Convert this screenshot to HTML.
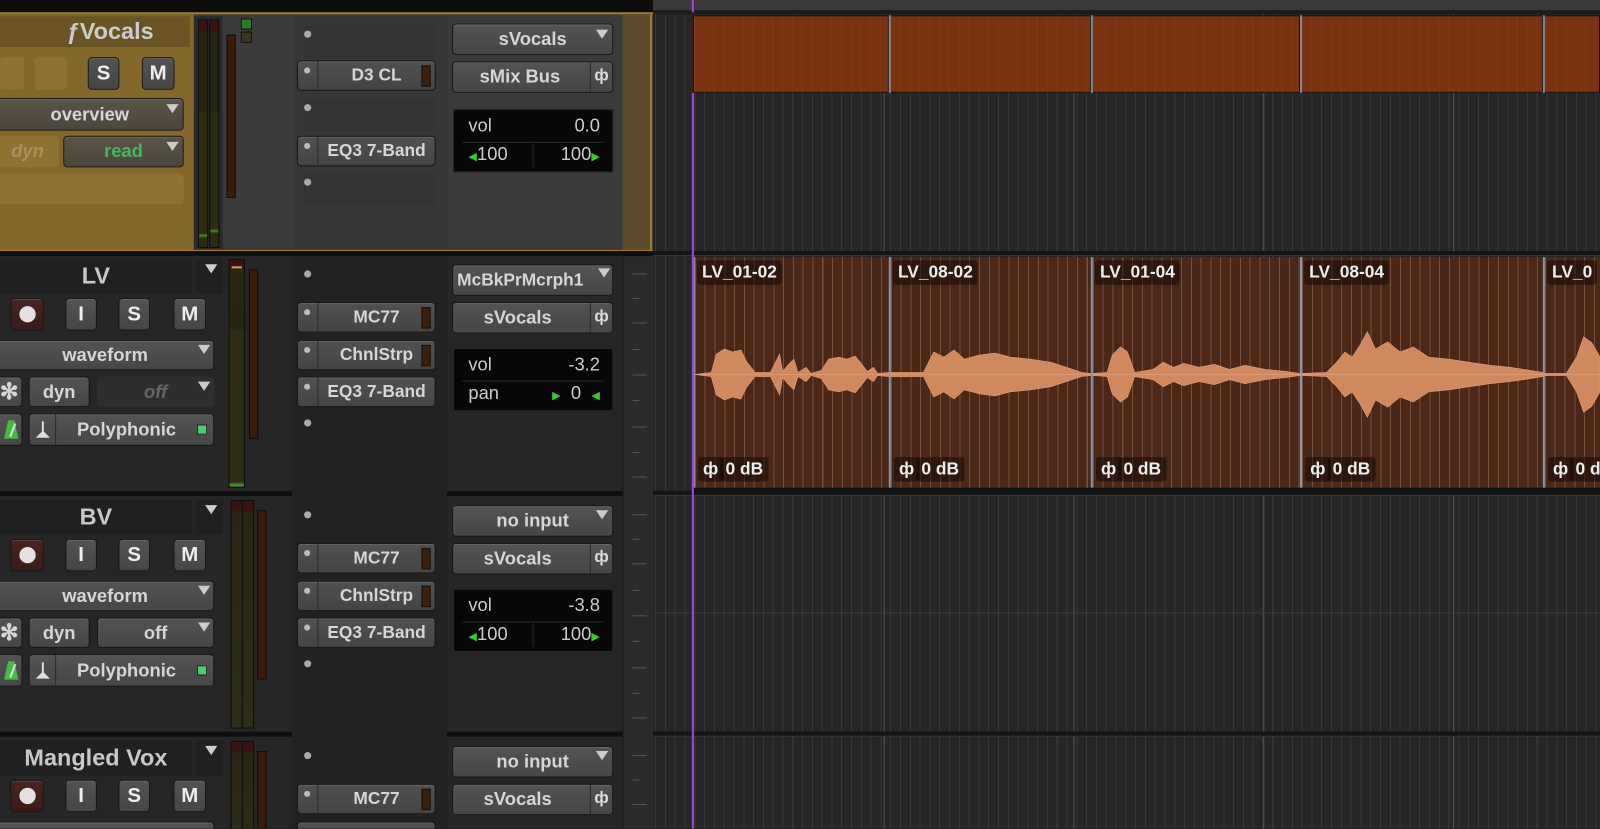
<!DOCTYPE html>
<html><head><meta charset="utf-8"><style>
*{margin:0;padding:0;box-sizing:border-box}
body{width:1600px;height:828px;overflow:hidden;background:#1c1c1c;font-family:"Liberation Sans",Arial,sans-serif}
#w{position:absolute;left:0;top:0;width:1568px;height:812px;transform:scale(1.020408);transform-origin:0 0;overflow:hidden;background:#1c1c1c}
.a{position:absolute}
.b{position:absolute;background:linear-gradient(#535353,#464646);border:1px solid #181818;border-radius:4px;color:#d6d6d6;font-weight:bold;font-size:18px;text-align:center;box-shadow:inset 0 1px 0 rgba(255,255,255,.12);white-space:nowrap}
.tri{position:absolute;width:0;height:0;border-left:6px solid transparent;border-right:6px solid transparent;border-top:9px solid #ccc}
.dot{position:absolute;width:7px;height:7px;border-radius:50%;background:#aaa}
.vol{position:absolute;background:#070707;border:1px solid #2a2a2a;color:#ccc;font-size:18px}
.mt{position:absolute;background:linear-gradient(#3a1212 0,#3a1212 3%,#2a2612 4%,#262510 30%,#2f2e12 31%,#2e2e14 98%,#4a8a2a 99%);border:1px solid #0e0e0e}
.mt2{position:absolute;background:#3b1c0a;border:1px solid #0e0e0e}
.ins{position:absolute;height:30px;border-radius:4px;background:linear-gradient(#515151,#444);border:1px solid #181818;color:#d6d6d6;font-weight:bold;font-size:17px;box-shadow:inset 0 1px 0 rgba(255,255,255,.12);white-space:nowrap}
.ins .l{position:absolute;left:0;top:0;width:20px;height:100%;border-right:1px solid #2a2a2a}
.ins .l i{position:absolute;left:6px;top:6px;width:6px;height:6px;border-radius:50%;background:#bbb}
.ins .t{position:absolute;left:20px;right:0;top:0;line-height:28px;text-align:center}
.ins .r{position:absolute;right:4px;top:4px;width:9px;height:21px;background:#3d1e08;border:1px solid #111}
.fd{position:absolute;right:0;top:0;width:22px;height:100%;border-left:1px solid #2a2a2a;color:#ddd;font-size:16px;line-height:28px;text-align:center}
.grid{position:absolute;background-image:repeating-linear-gradient(90deg,#383838 0,#383838 1px,transparent 1px,transparent 9.6px)}
.clip{position:absolute;top:252px;height:226px;background-color:#4a2717;background-image:repeating-linear-gradient(90deg,rgba(230,170,140,.3) 0,rgba(230,170,140,.3) 1px,transparent 1px,transparent 9.6px);border-left:2px solid #8896a8}
.lab{position:absolute;background:rgba(20,10,5,.55);color:#eee;font-weight:bold;font-size:17px;padding:2px 5px;border-radius:3px;white-space:nowrap}
.tick{position:absolute;left:620px;width:14px;height:1px;background:#555}
</style></head><body><div id="w">

<div class="a" style="left:0;top:0;width:640px;height:12px;background:#0d0d0d"></div>
<div class="a" style="left:640px;top:0;width:928px;height:12px;background:#3a3a3a;border-bottom:2px solid #1a1a1a"></div>

<div class="a" style="left:0;top:12px;width:640px;height:235px;background:#3a3a3a;border-top:2px solid #a07a2a"></div>
<div class="a" style="left:0;top:14px;width:190px;height:233px;background:#84672a"></div>
<div class="a" style="left:0;top:16px;width:186px;height:30px;background:#6a5426"></div>
<div class="a" style="left:0;top:17px;width:186px;text-align:center;color:#ccc;font-weight:bold;font-size:23px;padding-left:30px">ƒVocals</div>
<div class="a" style="left:0;top:56px;width:24px;height:32px;background:#8f7131;border-radius:4px"></div>
<div class="a" style="left:34px;top:56px;width:32px;height:32px;background:#8f7131;border-radius:4px"></div>
<div class="b" style="left:86px;top:56px;width:31px;height:32px;line-height:30px;font-size:20px;color:#eee">S</div>
<div class="b" style="left:139px;top:56px;width:32px;height:32px;line-height:30px;font-size:20px;color:#eee">M</div>
<div class="b" style="left:-4px;top:96px;width:184px;height:32px;line-height:30px;background:linear-gradient(#5a5446,#4c473c)">overview</div>
<div class="tri" style="left:163px;top:102px"></div>
<div class="a" style="left:-4px;top:133px;width:62px;height:31px;background:#8f7131;border-radius:4px;color:#a89060;font-style:italic;font-weight:bold;font-size:18px;line-height:31px;text-align:center">dyn</div>
<div class="b" style="left:62px;top:133px;width:118px;height:31px;line-height:29px;color:#44b860;background:linear-gradient(#5a5446,#4c473c)">read</div>
<div class="tri" style="left:163px;top:139px"></div>
<div class="a" style="left:-4px;top:170px;width:184px;height:30px;background:#8f7131;border-radius:4px"></div>
<div class="a" style="left:190px;top:16px;width:28px;height:228px;background:#2a2a2a"></div>
<div class="mt" style="left:194px;top:19px;width:10px;height:224px;background:linear-gradient(#3a1212 0,#3a1212 5%,#262510 6%,#262510 40%,#2c2c12 41%,#2c2c12 94%,#4a8a2a 95%,#2c2c12 96%)"></div>
<div class="mt" style="left:205px;top:19px;width:10px;height:224px;background:linear-gradient(#3a1212 0,#3a1212 5%,#262510 6%,#262510 40%,#2c2c12 41%,#2c2c12 92%,#4a8a2a 93%,#2c2c12 94%)"></div>
<div class="mt2" style="left:222px;top:34px;width:9px;height:160px"></div>
<div class="a" style="left:236px;top:18px;width:11px;height:11px;background:#2f7a2a;border:1px solid #111"></div>
<div class="a" style="left:236px;top:31px;width:11px;height:11px;background:#3a3222;border:1px solid #111"></div>
<div class="a" style="left:288px;top:16px;width:150px;height:230px;background:#363636"></div>
<div class="a" style="left:297px;top:24px;width:130px;height:32px;background:#333;border-radius:4px"></div><div class="dot" style="left:298px;top:30px"></div>
<div class="ins" style="left:291px;top:59px;width:136px"><div class="l"><i></i></div><div class="t">D3 CL</div><div class="r"></div></div>
<div class="a" style="left:297px;top:96px;width:130px;height:32px;background:#333;border-radius:4px"></div><div class="dot" style="left:298px;top:102px"></div>
<div class="ins" style="left:291px;top:133px;width:136px"><div class="l"><i></i></div><div class="t">EQ3 7-Band</div></div>
<div class="a" style="left:297px;top:169px;width:130px;height:32px;background:#333;border-radius:4px"></div><div class="dot" style="left:298px;top:175px"></div>
<div class="b" style="left:443px;top:23px;width:158px;height:31px;line-height:29px">sVocals</div><div class="tri" style="left:584px;top:29px"></div>
<div class="b" style="left:443px;top:60px;width:158px;height:31px;line-height:29px;text-align:left;padding-left:26px">sMix Bus<div class="fd">ф</div></div>
<div class="vol" style="left:444px;top:107px;width:157px;height:62px">
<div class="a" style="left:14px;top:5px">vol</div><div class="a" style="right:12px;top:5px">0.0</div>
<div class="a" style="left:8px;right:8px;top:31px;height:1px;background:#2a2a2a"></div>
<div class="a" style="left:14px;top:33px"><span style="color:#3c3;font-size:11px">◀</span>100</div><div class="a" style="left:77px;top:32px;width:1px;height:24px;background:#2a2a2a"></div><div class="a" style="right:12px;top:33px">100<span style="color:#3c3;font-size:11px">▶</span></div></div>
<div class="a" style="left:610px;top:14px;width:29px;height:233px;background:#5c4c2c;border-right:2px solid #a07a2a"></div>
<div class="a" style="left:0;top:245px;width:640px;height:2px;background:#a07a2a"></div>

<div class="a" style="left:0;top:246px;width:1568px;height:5px;background:#0e0e0e"></div>
<div class="a" style="left:0;top:481px;width:1568px;height:5px;background:#0e0e0e"></div>
<div class="a" style="left:0;top:717px;width:1568px;height:5px;background:#0e0e0e"></div>

<div class="a" style="left:0;top:251px;width:640px;height:230px;background:#262626"></div>
<div class="a" style="left:0;top:486px;width:640px;height:231px;background:#262626"></div>
<div class="a" style="left:0;top:722px;width:640px;height:90px;background:#262626"></div>
<div class="a" style="left:286px;top:251px;width:152px;height:561px;background:#222"></div>
<div class="a" style="left:610px;top:251px;width:30px;height:561px;background:#2a2a2a;border-left:1px solid #181818"></div>

<!-- LV -->
<div class="a" style="left:0;top:254px;width:188px;height:34px;background:#202020"></div>
<div class="a" style="left:0;top:254px;width:188px;text-align:center;color:#c8c8c8;font-weight:bold;font-size:23px;line-height:32px">LV</div>
<div class="a" style="left:192px;top:254px;width:26px;height:34px;background:#202020"></div><div class="tri" style="left:201px;top:259px"></div>
<div class="b" style="left:10px;top:292px;width:33px;height:32px;background:linear-gradient(#4a2424,#3a1a1a)"><div class="a" style="left:8px;top:7px;width:16px;height:16px;border-radius:50%;background:#e8e0e0"></div></div>
<div class="b" style="left:64px;top:292px;width:31px;height:32px;line-height:30px;font-size:20px;color:#eee">I</div>
<div class="b" style="left:116px;top:292px;width:31px;height:32px;line-height:30px;font-size:20px;color:#eee">S</div>
<div class="b" style="left:170px;top:292px;width:32px;height:32px;line-height:30px;font-size:20px;color:#eee">M</div>
<div class="b" style="left:-4px;top:333px;width:214px;height:30px;line-height:28px">waveform</div><div class="tri" style="left:194px;top:338px"></div>
<div class="b" style="left:-4px;top:369px;width:26px;height:30px;line-height:28px;font-size:22px">✻</div>
<div class="b" style="left:28px;top:369px;width:60px;height:30px;line-height:28px">dyn</div>
<div class="a" style="left:95px;top:369px;width:115px;height:30px;border-radius:4px;background:#2e2e2e;color:#666;font-style:italic;font-weight:bold;font-size:18px;line-height:30px;text-align:center">off</div><div class="tri" style="left:194px;top:374px"></div>
<div class="b" style="left:-4px;top:405px;width:26px;height:32px"><svg class="a" style="left:6px;top:5px" width="16" height="20"><path d="M5 1 L11 1 L15 19 L1 19 Z" fill="#3fbf3f"/><path d="M7 17 L12 4" stroke="#ddd" stroke-width="2"/></svg></div>
<div class="b" style="left:28px;top:405px;width:182px;height:32px;line-height:30px;padding-left:10px">Polyphonic<div class="a" style="left:0;top:0;width:26px;height:30px;border-right:1px solid #2a2a2a"><svg class="a" style="left:5px;top:6px" width="16" height="18"><path d="M7 1 L9 1 L9 11 L15 17 L1 17 L7 11 Z" fill="#ddd"/></svg></div><div class="a" style="right:6px;top:10px;width:10px;height:10px;background:#4ccc6c;border:1px solid #222"></div></div>
<div class="mt" style="left:224px;top:254px;width:16px;height:224px"></div>
<div class="a" style="left:227px;top:261px;width:10px;height:2px;background:#d8a050"></div>
<div class="mt2" style="left:244px;top:264px;width:9px;height:166px"></div>
<div class="dot" style="left:298px;top:265px"></div>
<div class="ins" style="left:291px;top:296px;width:136px"><div class="l"><i></i></div><div class="t">MC77</div><div class="r"></div></div>
<div class="ins" style="left:291px;top:333px;width:136px"><div class="l"><i></i></div><div class="t">ChnlStrp</div><div class="r"></div></div>
<div class="ins" style="left:291px;top:369px;width:136px"><div class="l"><i></i></div><div class="t">EQ3 7-Band</div></div>
<div class="dot" style="left:298px;top:411px"></div>
<div class="b" style="left:443px;top:259px;width:158px;height:31px;line-height:29px;font-size:17px;text-align:left;padding-left:4px">McBkPrMcrph1</div><div class="tri" style="left:586px;top:263px"></div>
<div class="b" style="left:443px;top:296px;width:158px;height:31px;line-height:29px;text-align:left;padding-left:30px">sVocals<div class="fd">ф</div></div>
<div class="vol" style="left:444px;top:341px;width:157px;height:62px">
<div class="a" style="left:14px;top:5px">vol</div><div class="a" style="right:12px;top:5px">-3.2</div>
<div class="a" style="left:8px;right:8px;top:31px;height:1px;background:#2a2a2a"></div>
<div class="a" style="left:14px;top:33px">pan</div><div class="a" style="right:12px;top:33px"><span style="color:#3c3;font-size:11px">▶</span>&nbsp; 0 &nbsp;<span style="color:#3c3;font-size:11px">◀</span></div></div>

<!-- BV -->
<div class="a" style="left:0;top:490px;width:188px;height:34px;background:#202020"></div>
<div class="a" style="left:0;top:490px;width:188px;text-align:center;color:#c8c8c8;font-weight:bold;font-size:23px;line-height:32px">BV</div>
<div class="a" style="left:192px;top:490px;width:26px;height:34px;background:#202020"></div><div class="tri" style="left:201px;top:495px"></div>
<div class="b" style="left:10px;top:528px;width:33px;height:32px;background:linear-gradient(#4a2424,#3a1a1a)"><div class="a" style="left:8px;top:7px;width:16px;height:16px;border-radius:50%;background:#e8e0e0"></div></div>
<div class="b" style="left:64px;top:528px;width:31px;height:32px;line-height:30px;font-size:20px;color:#eee">I</div>
<div class="b" style="left:116px;top:528px;width:31px;height:32px;line-height:30px;font-size:20px;color:#eee">S</div>
<div class="b" style="left:170px;top:528px;width:32px;height:32px;line-height:30px;font-size:20px;color:#eee">M</div>
<div class="b" style="left:-4px;top:569px;width:214px;height:30px;line-height:28px">waveform</div><div class="tri" style="left:194px;top:574px"></div>
<div class="b" style="left:-4px;top:605px;width:26px;height:30px;line-height:28px;font-size:22px">✻</div>
<div class="b" style="left:28px;top:605px;width:60px;height:30px;line-height:28px">dyn</div>
<div class="b" style="left:95px;top:605px;width:115px;height:30px;line-height:28px">off</div><div class="tri" style="left:194px;top:610px"></div>
<div class="b" style="left:-4px;top:641px;width:26px;height:32px"><svg class="a" style="left:6px;top:5px" width="16" height="20"><path d="M5 1 L11 1 L15 19 L1 19 Z" fill="#3fbf3f"/><path d="M7 17 L12 4" stroke="#ddd" stroke-width="2"/></svg></div>
<div class="b" style="left:28px;top:641px;width:182px;height:32px;line-height:30px;padding-left:10px">Polyphonic<div class="a" style="left:0;top:0;width:26px;height:30px;border-right:1px solid #2a2a2a"><svg class="a" style="left:5px;top:6px" width="16" height="18"><path d="M7 1 L9 1 L9 11 L15 17 L1 17 L7 11 Z" fill="#ddd"/></svg></div><div class="a" style="right:6px;top:10px;width:10px;height:10px;background:#4ccc6c;border:1px solid #222"></div></div>
<div class="mt" style="left:226px;top:490px;width:12px;height:224px;background:linear-gradient(#3a1212 0,#3a1212 4%,#2a2612 5%,#2e2e14 100%)"></div>
<div class="mt" style="left:237px;top:490px;width:12px;height:224px;background:linear-gradient(#3a1212 0,#3a1212 4%,#2a2612 5%,#2e2e14 100%)"></div>
<div class="mt2" style="left:252px;top:500px;width:9px;height:166px"></div>
<div class="dot" style="left:298px;top:501px"></div>
<div class="ins" style="left:291px;top:532px;width:136px"><div class="l"><i></i></div><div class="t">MC77</div><div class="r"></div></div>
<div class="ins" style="left:291px;top:569px;width:136px"><div class="l"><i></i></div><div class="t">ChnlStrp</div><div class="r"></div></div>
<div class="ins" style="left:291px;top:605px;width:136px"><div class="l"><i></i></div><div class="t">EQ3 7-Band</div></div>
<div class="dot" style="left:298px;top:647px"></div>
<div class="b" style="left:443px;top:495px;width:158px;height:31px;line-height:29px">no input</div><div class="tri" style="left:584px;top:500px"></div>
<div class="b" style="left:443px;top:532px;width:158px;height:31px;line-height:29px;text-align:left;padding-left:30px">sVocals<div class="fd">ф</div></div>
<div class="vol" style="left:444px;top:577px;width:157px;height:62px">
<div class="a" style="left:14px;top:5px">vol</div><div class="a" style="right:12px;top:5px">-3.8</div>
<div class="a" style="left:8px;right:8px;top:31px;height:1px;background:#2a2a2a"></div>
<div class="a" style="left:14px;top:33px"><span style="color:#3c3;font-size:11px">◀</span>100</div><div class="a" style="left:77px;top:32px;width:1px;height:24px;background:#2a2a2a"></div><div class="a" style="right:12px;top:33px">100<span style="color:#3c3;font-size:11px">▶</span></div></div>

<!-- Mangled Vox -->
<div class="a" style="left:0;top:726px;width:188px;height:34px;background:#202020"></div>
<div class="a" style="left:0;top:726px;width:188px;text-align:center;color:#c8c8c8;font-weight:bold;font-size:23px;line-height:32px">Mangled Vox</div>
<div class="a" style="left:192px;top:726px;width:26px;height:34px;background:#202020"></div><div class="tri" style="left:201px;top:731px"></div>
<div class="b" style="left:10px;top:764px;width:33px;height:32px;background:linear-gradient(#4a2424,#3a1a1a)"><div class="a" style="left:8px;top:7px;width:16px;height:16px;border-radius:50%;background:#e8e0e0"></div></div>
<div class="b" style="left:64px;top:764px;width:31px;height:32px;line-height:30px;font-size:20px;color:#eee">I</div>
<div class="b" style="left:116px;top:764px;width:31px;height:32px;line-height:30px;font-size:20px;color:#eee">S</div>
<div class="b" style="left:170px;top:764px;width:32px;height:32px;line-height:30px;font-size:20px;color:#eee">M</div>
<div class="b" style="left:-4px;top:805px;width:214px;height:30px"></div>
<div class="mt" style="left:226px;top:726px;width:12px;height:100px;background:linear-gradient(#3a1212 0,#3a1212 10%,#2a2612 11%,#2e2e14 100%)"></div>
<div class="mt" style="left:237px;top:726px;width:12px;height:100px;background:linear-gradient(#3a1212 0,#3a1212 10%,#2a2612 11%,#2e2e14 100%)"></div>
<div class="mt2" style="left:252px;top:736px;width:9px;height:90px"></div>
<div class="dot" style="left:298px;top:737px"></div>
<div class="ins" style="left:291px;top:768px;width:136px"><div class="l"><i></i></div><div class="t">MC77</div><div class="r"></div></div>
<div class="ins" style="left:291px;top:805px;width:136px"></div>
<div class="b" style="left:443px;top:731px;width:158px;height:31px;line-height:29px">no input</div><div class="tri" style="left:584px;top:736px"></div>
<div class="b" style="left:443px;top:768px;width:158px;height:31px;line-height:29px;text-align:left;padding-left:30px">sVocals<div class="fd">ф</div></div>

<div class="tick" style="top:268px"></div><div class="tick" style="top:292px;width:7px"></div><div class="tick" style="top:316px"></div><div class="tick" style="top:342px;width:7px"></div><div class="tick" style="top:367px"></div><div class="tick" style="top:392px;width:7px"></div><div class="tick" style="top:418px"></div><div class="tick" style="top:443px;width:7px"></div><div class="tick" style="top:467px"></div>
<div class="tick" style="top:504px"></div><div class="tick" style="top:528px;width:7px"></div><div class="tick" style="top:552px"></div><div class="tick" style="top:578px;width:7px"></div><div class="tick" style="top:603px"></div><div class="tick" style="top:628px;width:7px"></div><div class="tick" style="top:654px"></div><div class="tick" style="top:679px;width:7px"></div><div class="tick" style="top:703px"></div>
<div class="tick" style="top:740px"></div><div class="tick" style="top:764px;width:7px"></div><div class="tick" style="top:788px"></div>

<!-- TIMELINE -->
<div class="a" style="left:640px;top:14px;width:928px;height:232px;background:#262626"></div>
<div class="grid" style="left:642px;top:14px;width:926px;height:232px"></div>
<div class="a" style="left:640px;top:251px;width:928px;height:230px;background:#262626"></div>
<div class="grid" style="left:642px;top:251px;width:926px;height:230px"></div>
<div class="a" style="left:640px;top:486px;width:928px;height:231px;background:#262626"></div>
<div class="grid" style="left:642px;top:486px;width:926px;height:231px"></div>
<div class="a" style="left:640px;top:722px;width:928px;height:90px;background:#262626"></div>
<div class="grid" style="left:642px;top:722px;width:926px;height:90px"></div>
<div class="a" style="left:866px;top:14px;width:1px;height:798px;background:#555"></div>
<div class="a" style="left:1052px;top:14px;width:1px;height:798px;background:#555"></div>
<div class="a" style="left:1238px;top:14px;width:1px;height:798px;background:#555"></div>
<div class="a" style="left:1424px;top:14px;width:1px;height:798px;background:#555"></div>
<div class="a" style="left:640px;top:246px;width:928px;height:5px;background:#141414;border-bottom:1px solid #3a3a3a"></div>
<div class="a" style="left:640px;top:481px;width:928px;height:5px;background:#141414;border-bottom:1px solid #3a3a3a"></div>
<div class="a" style="left:640px;top:717px;width:928px;height:5px;background:#141414;border-bottom:1px solid #3a3a3a"></div>
<div class="a" style="left:640px;top:600px;width:928px;height:1px;background:#3a3a3a"></div>

<div class="a" style="left:679px;top:15px;width:889px;height:76px;background:#7a3311;border:1px solid #111;background-image:repeating-linear-gradient(90deg,rgba(255,255,255,.03) 0,rgba(255,255,255,.03) 1px,transparent 1px,transparent 9.6px)"></div>
<div class="a" style="left:870px;top:15px;width:3px;height:76px;background:#888;border-left:1px solid #111"></div>
<div class="a" style="left:1068px;top:15px;width:3px;height:76px;background:#888;border-left:1px solid #111"></div>
<div class="a" style="left:1273px;top:15px;width:3px;height:76px;background:#888;border-left:1px solid #111"></div>
<div class="a" style="left:1511px;top:15px;width:3px;height:76px;background:#888;border-left:1px solid #111"></div>

<div class="clip" style="left:679px;width:193px"></div>
<div class="clip" style="left:871px;width:199px"></div>
<div class="clip" style="left:1069px;width:206px"></div>
<div class="clip" style="left:1274px;width:239px"></div>
<div class="clip" style="left:1512px;width:60px"></div>
<div class="a" style="left:679px;top:478px;width:889px;height:3px;background:#111"></div>

<svg class="a" style="left:0;top:0" width="1568" height="812">
<g id="wt" fill="#d0895e" stroke="#e0a07c" stroke-width=".6">
<path d="M681,367 L697,365 L702,347 L710,342 L718,345 L726,343 L732,355 L740,365 L755,365 L760,355 L764,347 L767,364 L772,358 L778,352 L782,365 L790,360 L795,366 L805,363 L812,352 L822,350 L830,352 L838,349 L843,355 L850,364 L856,360 L860,366 L871,365 L871,367 Z"/>
<path d="M873,367 L873,365 L905,365 L915,345 L925,350 L935,343 L945,352 L960,348 L975,346 L990,350 L1010,352 L1030,355 L1045,360 L1060,365 L1069,366 L1069,367 Z"/>
<path d="M1071,367 L1071,366 L1085,365 L1090,348 L1098,340 L1105,345 L1112,365 L1130,362 L1140,355 L1150,360 L1160,356 L1175,360 L1190,357 L1205,362 L1220,358 L1240,362 L1260,364 L1274,366 L1274,367 Z"/>
<path d="M1276,367 L1276,366 L1300,365 L1310,355 L1318,345 L1325,350 L1333,338 L1340,325 L1348,342 L1360,335 L1372,345 L1385,340 L1400,350 L1420,352 L1440,355 L1460,358 L1480,360 L1500,363 L1512,365 L1512,367 Z"/>
<path d="M1514,367 L1514,366 L1535,366 L1545,350 L1552,330 L1560,336 L1568,350 L1568,367 Z"/>
</g>
<use href="#wt" transform="translate(0,734) scale(1,-1)"/>
</svg>

<div class="lab" style="left:683px;top:255px">LV_01-02</div>
<div class="lab" style="left:875px;top:255px">LV_08-02</div>
<div class="lab" style="left:1073px;top:255px">LV_01-04</div>
<div class="lab" style="left:1278px;top:255px">LV_08-04</div>
<div class="lab" style="left:1516px;top:255px">LV_0</div>
<div class="lab" style="left:684px;top:448px">ф</div><div class="lab" style="left:706px;top:448px">0 dB</div>
<div class="lab" style="left:876px;top:448px">ф</div><div class="lab" style="left:898px;top:448px">0 dB</div>
<div class="lab" style="left:1074px;top:448px">ф</div><div class="lab" style="left:1096px;top:448px">0 dB</div>
<div class="lab" style="left:1279px;top:448px">ф</div><div class="lab" style="left:1301px;top:448px">0 dB</div>
<div class="lab" style="left:1517px;top:448px">ф</div><div class="lab" style="left:1539px;top:448px">0 dB</div>

<div class="a" style="left:678px;top:91px;width:2px;height:721px;background:#a340e8"></div>
<div class="a" style="left:678px;top:0;width:2px;height:12px;background:#a340e8"></div>
</div></body></html>
